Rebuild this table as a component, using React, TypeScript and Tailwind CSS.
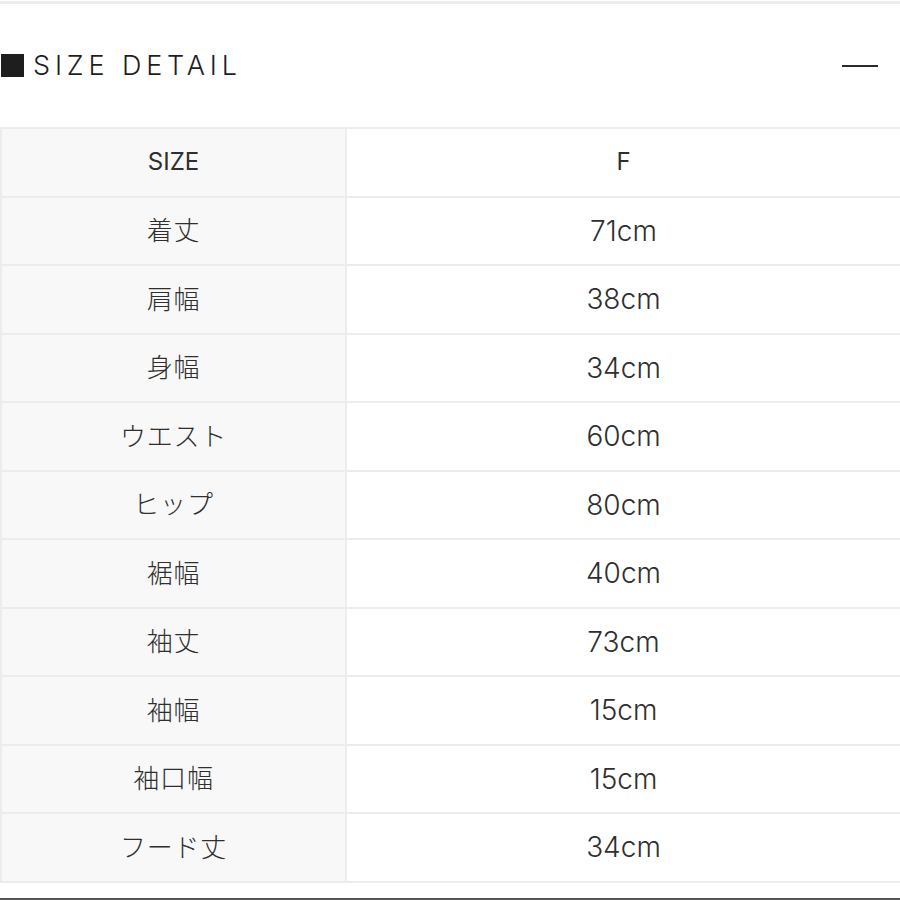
import React from "react";

const rows: [string, string][] = [
  ["SIZE", "F"],
  ["着丈", "71cm"],
  ["肩幅", "38cm"],
  ["身幅", "34cm"],
  ["ウエスト", "60cm"],
  ["ヒップ", "80cm"],
  ["裾幅", "40cm"],
  ["袖丈", "73cm"],
  ["袖幅", "15cm"],
  ["袖口幅", "15cm"],
  ["フード丈", "34cm"],
];

export default function App() {
  return (
    <div
      className="flex h-[900px] w-[900px] flex-col bg-white text-[#2b2b2b]"
      style={{ fontFamily: "Inter, 'Noto Sans CJK JP', sans-serif" }}
    >
      <div className="mt-[1px] h-[3px] w-full bg-[#ececec]" />
      <div className="flex h-[123px] items-center justify-between pl-[1px] pr-[22px]">
        <div className="flex items-center gap-[9px]">
          <span className="block h-[23px] w-[23px] bg-[#1e1e1e]" />
          <span className="text-[27px] font-light leading-none tracking-[0.18em] text-[#1e1e1e]">
            SIZE DETAIL
          </span>
        </div>
        <span className="block h-[2px] w-[36px] bg-[#2b2b2b]" />
      </div>
      <div className="border-t-2 border-[#ececec]">
        {rows.map(([label, value], i) => (
          <div
            key={label}
            className="flex h-[68.5px] border-b-2 border-[#ececec] font-light text-[#2f2f2f]"
          >
            <div
              className={
                i === 0
                  ? "flex w-[347px] items-center justify-center border-x-2 border-[#ececec] bg-[#f8f8f8] text-[24px] font-normal"
                  : "flex w-[347px] items-center justify-center border-x-2 border-[#ececec] bg-[#f8f8f8] text-[26px] tracking-[0.03em]"
              }
            >
              {label}
            </div>
            <div
              className={
                i === 0
                  ? "flex flex-1 items-center justify-center bg-white text-[24px] font-normal"
                  : "flex flex-1 items-center justify-center bg-white text-[28px]"
              }
            >
              {value}
            </div>
          </div>
        ))}
      </div>
      <div className="flex-1" />
      <div className="h-[2px] w-full bg-[#555]" />
    </div>
  );
}
